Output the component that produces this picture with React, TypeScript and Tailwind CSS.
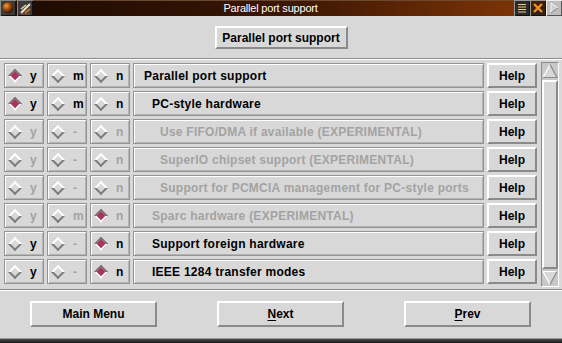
import React from 'react'

type Row = {
  label: string
  indent: number
  enabled: boolean
  yOn: boolean
  nOn: boolean
  yEnabled: boolean
  mLabel: string
  mEnabled: boolean
}

const rows: Row[] = [
  { label: 'Parallel port support', indent: 0, enabled: true, yOn: true, nOn: false, yEnabled: true, mLabel: 'm', mEnabled: true },
  { label: 'PC-style hardware', indent: 1, enabled: true, yOn: true, nOn: false, yEnabled: true, mLabel: 'm', mEnabled: true },
  { label: 'Use FIFO/DMA if available (EXPERIMENTAL)', indent: 2, enabled: false, yOn: false, nOn: false, yEnabled: false, mLabel: '-', mEnabled: false },
  { label: 'SuperIO chipset support (EXPERIMENTAL)', indent: 2, enabled: false, yOn: false, nOn: false, yEnabled: false, mLabel: '-', mEnabled: false },
  { label: 'Support for PCMCIA management for PC-style ports', indent: 2, enabled: false, yOn: false, nOn: false, yEnabled: false, mLabel: '-', mEnabled: false },
  { label: 'Sparc hardware (EXPERIMENTAL)', indent: 1, enabled: false, yOn: false, nOn: true, yEnabled: false, mLabel: 'm', mEnabled: false },
  { label: 'Support foreign hardware', indent: 1, enabled: true, yOn: false, nOn: true, yEnabled: true, mLabel: '-', mEnabled: false },
  { label: 'IEEE 1284 transfer modes', indent: 1, enabled: true, yOn: false, nOn: true, yEnabled: true, mLabel: '-', mEnabled: false },
]

const cell = 'border border-[#939393] shadow-[inset_1px_1px_0_#ffffff,inset_-1px_-1px_0_#b4b4b4]'
const raised = 'border-2 border-t-white border-l-white border-b-[#8a8a8a] border-r-[#8a8a8a]'

function Diamond({ on }: { on: boolean }) {
  return (
    <span className="flex h-[14px] w-[14px] items-center justify-center">
      <span
        className={
          on
            ? 'block h-[10px] w-[10px] rotate-45 border-2 border-t-[#777777] border-l-[#777777] border-b-white border-r-white bg-[#b03060]'
            : 'block h-[10px] w-[10px] rotate-45 border-2 border-t-white border-l-white border-b-[#7a7a7a] border-r-[#7a7a7a] bg-[#d8d8d8]'
        }
      />
    </span>
  )
}

function Choice({ on, text, enabled }: { on: boolean; text: string; enabled: boolean }) {
  return (
    <div className={`flex h-[25px] items-center gap-[8px] pl-[3px] ${cell}`}>
      <Diamond on={on} />
      <span className={enabled ? 'text-black' : 'text-[#a3a3a3]'}>{text}</span>
    </div>
  )
}

function TitleBar() {
  return (
    <div className="flex h-[16px] bg-gradient-to-r from-[#1c0a02] via-[#3a1604] to-[#8a3a06] shadow-[inset_0_1px_0_#6b4a30]">
      <div className="flex h-[16px] w-[16px] items-center justify-center bg-[#3b3b3b] shadow-[inset_1px_1px_0_#888,inset_-1px_-1px_0_#111]">
        <svg width="12" height="12" viewBox="0 0 12 12">
          <defs>
            <radialGradient id="ball" cx="0.35" cy="0.3" r="0.7">
              <stop offset="0" stopColor="#f0a040" />
              <stop offset="0.5" stopColor="#a04a08" />
              <stop offset="1" stopColor="#3a1400" />
            </radialGradient>
          </defs>
          <circle cx="6" cy="6" r="5.5" fill="url(#ball)" />
        </svg>
      </div>
      <div className="ml-[1px] flex h-[16px] w-[16px] items-center justify-center bg-[#3b3b3b] shadow-[inset_1px_1px_0_#888,inset_-1px_-1px_0_#111]">
        <svg width="13" height="13" viewBox="0 0 13 13">
          <path d="M2 11 L11 2" stroke="#f2e6c8" strokeWidth="2" />
          <path d="M2 7 L7 3" stroke="#e8d8b0" strokeWidth="1.5" />
          <path d="M6 11 L11 7" stroke="#c87028" strokeWidth="2" />
          <path d="M2 12 L11 12" stroke="#a85010" strokeWidth="1" />
        </svg>
      </div>
      <div className="flex flex-1 items-center justify-center pr-[6px] text-[11px] font-normal leading-none tracking-[-0.2px] text-white [font-family:'Liberation_Sans',sans-serif]">
        Parallel port support
      </div>
      <div className="flex h-[16px] w-[16px] items-center justify-center bg-[#2a2a2a] shadow-[inset_1px_1px_0_#999,inset_-1px_-1px_0_#111]">
        <svg width="12" height="12" viewBox="0 0 12 12">
          <path d="M2 2.5 H10 M2 5 H10 M2 7.5 H10 M2 10 H10" stroke="#f0d080" strokeWidth="1.2" />
        </svg>
      </div>
      <div className="flex h-[16px] w-[16px] items-center justify-center bg-[#3a2010] shadow-[inset_1px_1px_0_#999,inset_-1px_-1px_0_#111]">
        <svg width="12" height="12" viewBox="0 0 12 12">
          <path d="M2 2 L10 10 M10 2 L2 10" stroke="#f09020" strokeWidth="2.4" />
        </svg>
      </div>
      <div className="flex h-[16px] w-[16px] items-center justify-center bg-[#bdbdbd] shadow-[inset_1px_1px_0_#eee,inset_-1px_-1px_0_#555]">
        <svg width="10" height="12" viewBox="0 0 10 12">
          <path d="M2 1 L9 6 L2 11 Z" fill="#d0d0d0" stroke="#f4f4f4" strokeWidth="1" />
          <path d="M9 6 L2 11" stroke="#777" strokeWidth="1" />
        </svg>
      </div>
    </div>
  )
}

function ScrollArrow({ up }: { up: boolean }) {
  return (
    <svg width="16" height="16" viewBox="0 0 16 16" className="block">
      {up ? (
        <>
          <path d="M8 1.5 L15 14.5 L1 14.5 Z" fill="#d8d8d8" />
          <path d="M1 14.5 L8 1.5" stroke="#ffffff" strokeWidth="1.2" />
          <path d="M8 1.5 L15 14.5 L1 14.5" stroke="#8a8a8a" strokeWidth="1.2" fill="none" />
        </>
      ) : (
        <>
          <path d="M1 1.5 L15 1.5 L8 14.5 Z" fill="#d8d8d8" />
          <path d="M1 1.5 L15 1.5 M1 1.5 L8 14.5" stroke="#ffffff" strokeWidth="1.2" fill="none" />
          <path d="M15 1.5 L8 14.5" stroke="#8a8a8a" strokeWidth="1.2" />
        </>
      )}
    </svg>
  )
}

function Scrollbar() {
  return (
    <div className="ml-[4px] mr-[3px] mt-[2px] flex h-[225px] w-[18px] flex-col border border-t-[#8a8a8a] border-l-[#8a8a8a] border-b-white border-r-white bg-[#c8c8c8]">
      <ScrollArrow up />
      <div className={`mx-0 my-[1px] flex-1 ${raised} bg-[#d8d8d8]`} />
      <ScrollArrow up={false} />
    </div>
  )
}

function Groove() {
  return <div className="h-[2px] border-t border-t-[#8a8a8a] border-b border-b-white" />
}

export default function App() {
  return (
    <div className="flex h-[343px] w-[562px] flex-col overflow-hidden bg-[#d8d8d8] text-[12px] font-bold leading-none text-black [font-family:'Liberation_Sans',Arial,sans-serif]">
      <TitleBar />

      <div className="flex h-[42px] justify-center pt-[10px]">
        <div className={`flex h-[23px] w-[133px] items-center justify-center ${raised}`}>Parallel port support</div>
      </div>

      <Groove />

      <div className="flex h-[229px]">
        <div className="flex flex-1 flex-col gap-[3px] pl-[4px] pt-[3px]">
          {rows.map((r) => (
            <div key={r.label} className="grid grid-cols-[40px_40px_40px_1fr_50px] gap-[3px]">
              <Choice on={r.yOn} text="y" enabled={r.yEnabled} />
              <Choice on={false} text={r.mLabel} enabled={r.mEnabled} />
              <Choice on={r.nOn} text="n" enabled={r.yEnabled} />
              <div
                className={`flex h-[25px] items-center tracking-[0.25px] ${cell} ${r.enabled ? 'text-black' : 'text-[#a3a3a3]'} ${
                  r.indent === 0 ? 'pl-[10px]' : r.indent === 1 ? 'pl-[18px]' : 'pl-[26px]'
                }`}
              >
                {r.label}
              </div>
              <div className={`flex h-[25px] items-center justify-center ${raised}`}>Help</div>
            </div>
          ))}
        </div>
        <Scrollbar />
      </div>

      <Groove />

      <div className="flex h-[47px] gap-[60px] pl-[30px] pt-[10px]">
        <div className={`flex h-[26px] w-[127px] items-center justify-center ${raised}`}>Main Menu</div>
        <div className={`flex h-[26px] w-[127px] items-center justify-center ${raised}`}>
          <span className="underline underline-offset-[2px]">N</span>ext
        </div>
        <div className={`flex h-[26px] w-[127px] items-center justify-center ${raised}`}>
          <span className="underline underline-offset-[2px]">P</span>rev
        </div>
      </div>

      <div className="h-[5px] bg-gradient-to-b from-[#5a5a5a] to-[#1a1a1a] shadow-[inset_0_1px_0_#9a9a9a]" />
    </div>
  )
}
